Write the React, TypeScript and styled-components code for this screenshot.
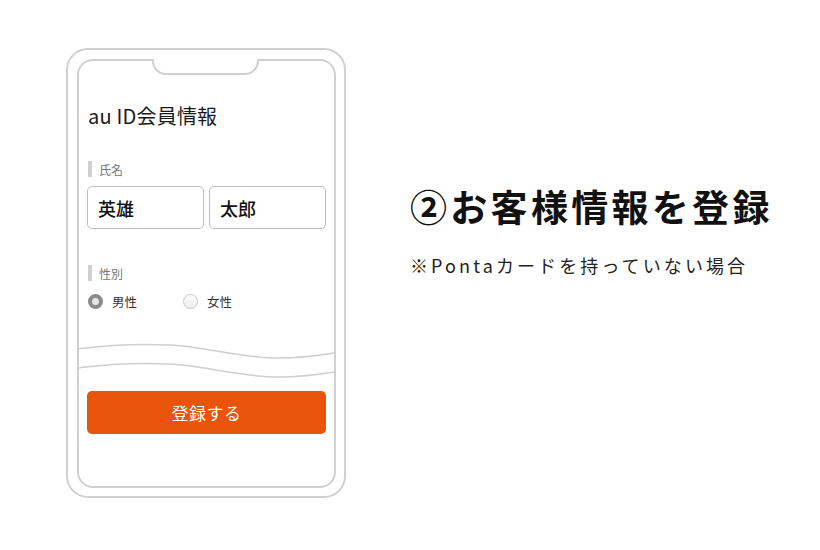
import React from "react";
import styled, { createGlobalStyle } from "styled-components";

const GlobalStyle = createGlobalStyle`
  html, body { margin: 0; padding: 0; background: #ffffff; }
  body { font-family: "Noto Sans CJK JP", "Noto Sans", sans-serif; color: #222; }
`;

const Page = styled.div`
  width: 820px;
  height: 550px;
  box-sizing: border-box;
  padding: 48px 0 0 66px;
  display: flex;
  align-items: flex-start;
  background: #fff;
`;

const PhoneOuter = styled.div`
  width: 280px;
  height: 450px;
  box-sizing: border-box;
  border: 2px solid #d0d0d0;
  border-radius: 22px;
  padding: 9px 8px 8px 9px;
  display: flex;
`;

const Screen = styled.div`
  position: relative;
  flex: 1;
  box-sizing: border-box;
  border: 2px solid #d0d0d0;
  border-radius: 16px;
  padding: 43px 8px 0 8px;
  display: flex;
  flex-direction: column;
`;

const Notch = styled.div`
  position: absolute;
  top: -2px;
  left: 73px;
  width: 107px;
  height: 16px;
  box-sizing: border-box;
  background: #fff;
  border: 2px solid #d0d0d0;
  border-top: none;
  border-radius: 0 0 14px 14px;
`;

const ScreenTitle = styled.div`
  font-size: 20px;
  line-height: 24px;
  font-weight: 400;
  color: #1a1a1a;
  padding-left: 1px;
  letter-spacing: 0.2px;
`;

const FieldLabel = styled.div<{ $top: number }>`
  margin-top: ${(p) => p.$top}px;
  display: flex;
  align-items: center;
  height: 16px;
  font-size: 12px;
  color: #777;
  padding-left: 1px;
  &::before {
    content: "";
    display: block;
    width: 4px;
    height: 16px;
    background: #cfcfcf;
    margin-right: 7px;
  }
`;

const InputRow = styled.div`
  margin-top: 9px;
  display: flex;
  gap: 5px;
`;

const Input = styled.div`
  flex: 1;
  height: 43px;
  box-sizing: border-box;
  border: 1.5px solid #bcbcbc;
  border-radius: 5px;
  display: flex;
  align-items: center;
  padding-left: 10px;
  font-size: 18px;
  font-weight: 500;
  color: #111;
`;

const RadioRow = styled.div`
  margin-top: 12px;
  display: flex;
  align-items: center;
  height: 16px;
  padding-left: 1px;
`;

const RadioItem = styled.div`
  display: flex;
  align-items: center;
  width: 95px;
  font-size: 12.5px;
  color: #333;
`;

const Radio = styled.span<{ $checked?: boolean }>`
  width: 15px;
  height: 15px;
  box-sizing: border-box;
  border-radius: 50%;
  margin-right: 9px;
  border: ${(p) => (p.$checked ? "4px solid #8a8a8a" : "1px solid #c8c8c8")};
  background: ${(p) =>
    p.$checked ? "#e6e6e6" : "linear-gradient(#ffffff, #ececec)"};
`;

const Waves = styled.svg`
  display: block;
  margin: 28px -8px 0 -8px;
  width: 255px;
  height: 45px;
`;

const SubmitButton = styled.div`
  margin-top: 9px;
  height: 43px;
  border-radius: 5px;
  background: #e8540a;
  color: #fff;
  font-size: 17px;
  font-weight: 400;
  display: flex;
  align-items: center;
  justify-content: center;
  letter-spacing: 0.5px;
`;

const InfoColumn = styled.div`
  margin-left: 64px;
  padding-top: 137px;
  display: flex;
  flex-direction: column;
`;

const StepTitle = styled.div`
  font-size: 37px;
  line-height: 42px;
  font-weight: 700;
  color: #111;
  letter-spacing: 3.3px;
`;

const Note = styled.div`
  margin-top: 26px;
  font-size: 18px;
  line-height: 24px;
  color: #222;
  letter-spacing: 3.1px;
`;

export default function App() {
  return (
    <>
      <GlobalStyle />
      <Page>
        <PhoneOuter>
          <Screen>
            <Notch />
            <ScreenTitle>au ID会員情報</ScreenTitle>
            <FieldLabel $top={33}>氏名</FieldLabel>
            <InputRow>
              <Input>英雄</Input>
              <Input>太郎</Input>
            </InputRow>
            <FieldLabel $top={36}>性別</FieldLabel>
            <RadioRow>
              <RadioItem>
                <Radio $checked />
                男性
              </RadioItem>
              <RadioItem>
                <Radio />
                女性
              </RadioItem>
            </RadioRow>
            <Waves viewBox="0 0 255 45" fill="none">
              <path
                d="M0 11.7 C30 8 60 6.5 90 8 C130 10 160 21 200 21 C225 21 242 18 255 16"
                stroke="#cfcfcf"
                strokeWidth="1.5"
              />
              <path
                d="M0 30.7 C30 27 60 25.5 90 27 C130 29 160 40 200 40 C225 40 242 37 255 35"
                stroke="#cfcfcf"
                strokeWidth="1.5"
              />
            </Waves>
            <SubmitButton>登録する</SubmitButton>
          </Screen>
        </PhoneOuter>
        <InfoColumn>
          <StepTitle>②お客様情報を登録</StepTitle>
          <Note>※Pontaカードを持っていない場合</Note>
        </InfoColumn>
      </Page>
    </>
  );
}
